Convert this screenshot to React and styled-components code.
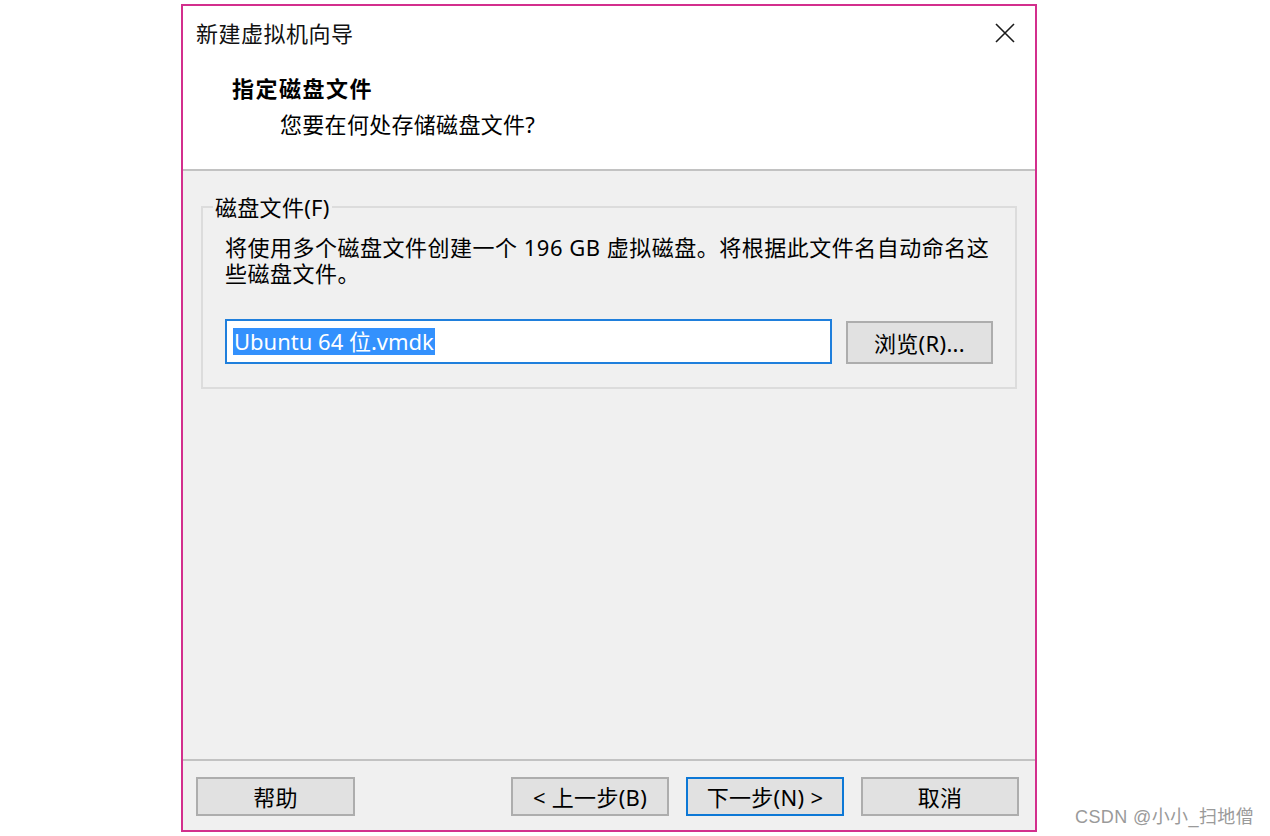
import styled, { createGlobalStyle } from 'styled-components'

const GlobalStyle = createGlobalStyle`
    *, *::before, *::after {
        box-sizing: border-box;
    }
    html, body {
        margin: 0;
        padding: 0;
        background: #ffffff;
    }
    body {
        font-family: "Noto Sans", "Noto Sans CJK SC", sans-serif;
    }
`

const Page = styled.div`
    position: relative;
    width: 1270px;
    height: 836px;
    padding: 4px 0 0 181px;
`

const Dialog = styled.div`
    width: 856px;
    height: 828px;
    border: 2px solid #d32f8d;
    display: flex;
    flex-direction: column;
    font-size: 22px;
    color: #000;
`

const Header = styled.div`
    height: 165px;
    background: #ffffff;
    display: flex;
    flex-direction: column;
    border-bottom: 2px solid #c2c2c2;
`

const TitleBar = styled.div`
    height: 54px;
    display: flex;
    align-items: center;
    justify-content: space-between;
    padding: 0 20px 0 13px;
`

const Title = styled.div`
    font-size: 22px;
    line-height: 30px;
    letter-spacing: 0.5px;
    color: #111;
`

const CloseIcon = styled.svg`
    width: 20px;
    height: 20px;
    display: block;
`

const Heading = styled.div`
    margin: 13px 0 0 49px;
    font-size: 22px;
    font-weight: 700;
    line-height: 30px;
    letter-spacing: 1.5px;
`

const SubHeading = styled.div`
    margin: 6px 0 0 97px;
    line-height: 30px;
    letter-spacing: 0.3px;
`

const Content = styled.div`
    flex: 1;
    background: #f0f0f0;
    padding: 22px 18px 0 18px;
`

const GroupBox = styled.fieldset`
    margin: 0;
    border: 2px solid #dcdcdc;
    padding: 0 22px 23px 22px;
`

const GroupLabel = styled.legend`
    margin-left: -12px;
    padding: 0 2px;
    line-height: 28px;
    letter-spacing: 0.3px;
`

const Description = styled.p`
    margin: 13px 0 0;
    line-height: 26px;
    letter-spacing: 0.5px;
`

const FileRow = styled.div`
    margin-top: 33px;
    display: flex;
    align-items: flex-end;
    gap: 14px;
`

const FileInput = styled.div`
    width: 607px;
    height: 45px;
    border: 2px solid #1f7fdc;
    background: #ffffff;
    padding: 0 0 0 6px;
    display: flex;
    align-items: center;
`

const Selected = styled.span`
    background: #3391fd;
    color: #ffffff;
    line-height: 27px;
    padding: 0 1px;
`

const Button = styled.button`
    width: ${p => p.$w || 158}px;
    height: ${p => p.$h || 39}px;
    background: #e1e1e1;
    border: 2px solid ${p => (p.$primary ? '#0d78d6' : '#adadad')};
    font-family: "Noto Sans", "Noto Sans CJK SC", sans-serif;
    font-size: 22px;
    letter-spacing: 0.3px;
    color: #000;
    padding: 0;
    line-height: 1;
    display: flex;
    align-items: center;
    justify-content: center;
`

const Footer = styled.div`
    height: 71px;
    background: #f0f0f0;
    border-top: 2px solid #c2c2c2;
    display: flex;
    align-items: flex-start;
    padding: 16px 16px 0 13px;
    gap: 17px;
`

const Spacer = styled.div`
    flex: 1;
`

const Watermark = styled.div`
    position: absolute;
    left: 1075px;
    top: 805px;
    font-family: "Liberation Sans", "Noto Sans CJK SC", sans-serif;
    font-size: 18px;
    line-height: 24px;
    letter-spacing: 0.4px;
    color: #9a9a9a;
`

export default function App() {
    return (
        <>
            <GlobalStyle />
            <Page>
                <Dialog>
                    <Header>
                        <TitleBar>
                            <Title>新建虚拟机向导</Title>
                            <CloseIcon viewBox="0 0 20 20">
                                <path d="M1 1 L19 19 M19 1 L1 19" stroke="#1a1a1a" strokeWidth="1.6" fill="none" />
                            </CloseIcon>
                        </TitleBar>
                        <Heading>指定磁盘文件</Heading>
                        <SubHeading>您要在何处存储磁盘文件?</SubHeading>
                    </Header>
                    <Content>
                        <GroupBox>
                            <GroupLabel>磁盘文件(F)</GroupLabel>
                            <Description>
                                将使用多个磁盘文件创建一个 196 GB 虚拟磁盘。将根据此文件名自动命名这
                                <br />
                                些磁盘文件。
                            </Description>
                            <FileRow>
                                <FileInput>
                                    <Selected>Ubuntu 64 位.vmdk</Selected>
                                </FileInput>
                                <Button $w={147} $h={43}>浏览(R)...</Button>
                            </FileRow>
                        </GroupBox>
                    </Content>
                    <Footer>
                        <Button $w={159}>帮助</Button>
                        <Spacer />
                        <Button>&lt; 上一步(B)</Button>
                        <Button $primary>下一步(N) &gt;</Button>
                        <Button>取消</Button>
                    </Footer>
                </Dialog>
                <Watermark>CSDN @小小_扫地僧</Watermark>
            </Page>
        </>
    )
}
